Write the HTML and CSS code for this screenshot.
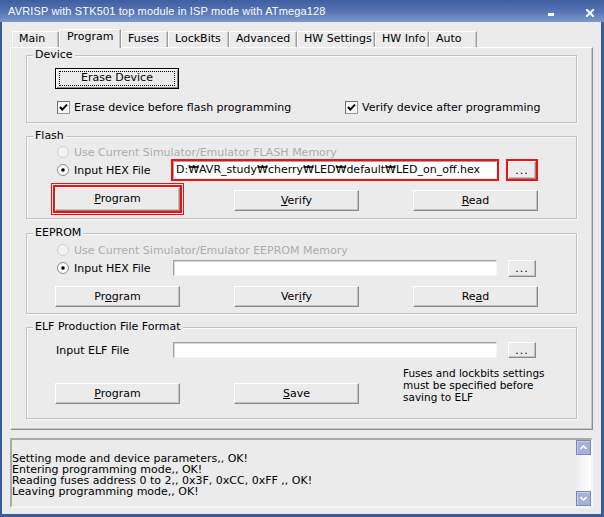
FILE: index.html
```html
<!DOCTYPE html>
<html>
<head>
<meta charset="utf-8">
<title>AVRISP</title>
<link rel="stylesheet" href="styles.css">
</head>
<body>
<div class="window">
  <div class="titlebar">
    <span class="title">AVRISP with STK501 top module in ISP mode with ATmega128</span>
    <span class="tb-min"></span>
    <svg class="tb-close" width="8" height="8" viewBox="0 0 8 8"><path d="M0.8 0.8 L7.2 7.2 M7.2 0.8 L0.8 7.2" stroke="#fff" stroke-width="2" stroke-linecap="square"/></svg>
  </div>
  <div class="client">
    <div class="tabs">
      <div class="tab t-main">Main</div>
      <div class="tab t-program active">Program</div>
      <div class="tab t-fuses">Fuses</div>
      <div class="tab t-lock">LockBits</div>
      <div class="tab t-adv">Advanced</div>
      <div class="tab t-hws">HW Settings</div>
      <div class="tab t-hwi">HW Info</div>
      <div class="tab t-auto">Auto</div>
    </div>
    <div class="panel">
      <div class="group g-device">
        <div class="legend">Device</div>
        <div class="row r-erase">
          <button class="btn btn-focus"><span class="focus-rect">Erase Device</span></button>
        </div>
        <div class="row r-checks">
          <label class="check c-first"><svg class="cb" width="13" height="13" viewBox="0 0 13 13"><rect x="0.5" y="0.5" width="12" height="12" fill="#f6f6f6" stroke="#9a9a9a"/><path d="M0.5 12.5 V0.5 H12.5" fill="none" stroke="#6e6e6e"/><path d="M3 6 L5.3 8.6 L10 3.6" fill="none" stroke="#000" stroke-width="2"/></svg>Erase device before flash programming</label>
          <label class="check"><svg class="cb" width="13" height="13" viewBox="0 0 13 13"><rect x="0.5" y="0.5" width="12" height="12" fill="#f6f6f6" stroke="#9a9a9a"/><path d="M0.5 12.5 V0.5 H12.5" fill="none" stroke="#6e6e6e"/><path d="M3 6 L5.3 8.6 L10 3.6" fill="none" stroke="#000" stroke-width="2"/></svg>Verify device after programming</label>
        </div>
      </div>

      <div class="group g-flash">
        <div class="legend">Flash</div>
        <div class="row r-opt first">
          <label class="radio disabled"><svg class="rd" width="12" height="12" viewBox="0 0 12 12"><circle cx="6" cy="6" r="5.5" fill="#f2f2f2" stroke="#d0d0d0"/></svg>Use Current Simulator/Emulator FLASH Memory</label>
        </div>
        <div class="row r-opt">
          <label class="radio fixed"><svg class="rd" width="12" height="12" viewBox="0 0 12 12"><circle cx="6" cy="6" r="5.5" fill="#fff" stroke="#8a8a8a"/><circle cx="6" cy="6" r="1.8" fill="#000"/></svg>Input HEX File</label>
          <div class="field tall hl">D:₩AVR_study₩cherry₩LED₩default₩LED_on_off.hex</div>
          <button class="btn dots tall hl">...</button>
        </div>
        <div class="row r-btns flash-btns">
          <button class="btn b-act big hl2"><u>P</u>rogram</button>
          <button class="btn b-act"><u>V</u>erify</button>
          <button class="btn b-act"><u>R</u>ead</button>
        </div>
      </div>

      <div class="group g-eeprom">
        <div class="legend">EEPROM</div>
        <div class="row r-opt first2">
          <label class="radio disabled"><svg class="rd" width="12" height="12" viewBox="0 0 12 12"><circle cx="6" cy="6" r="5.5" fill="#f2f2f2" stroke="#d0d0d0"/></svg>Use Current Simulator/Emulator EEPROM Memory</label>
        </div>
        <div class="row r-opt">
          <label class="radio fixed"><svg class="rd" width="12" height="12" viewBox="0 0 12 12"><circle cx="6" cy="6" r="5.5" fill="#fff" stroke="#8a8a8a"/><circle cx="6" cy="6" r="1.8" fill="#000"/></svg>Input HEX File</label>
          <div class="field"></div>
          <button class="btn dots">...</button>
        </div>
        <div class="row r-btns eeprom-btns">
          <button class="btn b-act">Pr<u>o</u>gram</button>
          <button class="btn b-act">Ver<u>i</u>fy</button>
          <button class="btn b-act">Re<u>a</u>d</button>
        </div>
      </div>

      <div class="group g-elf">
        <div class="legend">ELF Production File Format</div>
        <div class="row r-elf">
          <span class="fixed elf-label">Input ELF File</span>
          <div class="field"></div>
          <button class="btn dots">...</button>
        </div>
        <div class="row r-elf-btns">
          <button class="btn b-act"><u>P</u>rogram</button>
          <button class="btn b-act"><u>S</u>ave</button>
          <p class="note">Fuses and lockbits settings<br>must be specified before<br>saving to ELF</p>
        </div>
      </div>
    </div>

    <div class="log">
      <div class="log-text">Setting mode and device parameters,, OK!
Entering programming mode,, OK!
Reading fuses address 0 to 2,, 0x3F, 0xCC, 0xFF ,, OK!
Leaving programming mode,, OK!</div>
      <div class="scrollbar">
        <div class="sb-btn"><svg width="7" height="5" viewBox="0 0 7 5"><path d="M0.5 4 L3.5 1 L6.5 4" fill="none" stroke="#fff" stroke-width="1.6"/></svg></div>
        <div class="sb-track"></div>
        <div class="sb-btn"><svg width="7" height="5" viewBox="0 0 7 5"><path d="M0.5 1 L3.5 4 L6.5 1" fill="none" stroke="#fff" stroke-width="1.6"/></svg></div>
      </div>
    </div>
  </div>
</div>
</body>
</html>
```

FILE: styles.css
```css
* { box-sizing: border-box; }
html, body { margin: 0; padding: 0; }
body {
  width: 604px;
  height: 517px;
  overflow: hidden;
  font-family: "DejaVu Sans", "Noto Sans CJK KR", sans-serif;
  font-size: 11px;
  color: #000;
  background: #3c5a9c;
}

.window {
  width: 604px;
  height: 517px;
  display: flex;
  flex-direction: column;
  background: #3c5a9c;
}

/* title bar */
.titlebar {
  height: 22px;
  flex: none;
  display: flex;
  align-items: flex-start;
  padding: 0 10px 0 8px;
  background: linear-gradient(#3f5ea2, #5876b4 55%, #7b99cd);
  color: #fff;
}
.title {
  flex: 1;
  font-family: "Liberation Sans", Arial, sans-serif;
  font-size: 11px;
  line-height: 12px;
  margin-top: 5px;
  letter-spacing: 0.15px;
}
.tb-min {
  width: 6px;
  height: 3px;
  background: #fff;
  margin-top: 13px;
  margin-right: 32px;
}
.tb-close {
  margin-top: 9px;
}

/* client area */
.client {
  flex: 1;
  margin: 0 3px 3px 2px;
  background: #ebebeb;
  padding: 7px 8px 6px 8px;
  display: flex;
  flex-direction: column;
}

/* tabs */
.tabs {
  height: 18px;
  display: flex;
  align-items: flex-end;
  padding-left: 2px;
}
.tab {
  height: 16px;
  line-height: 14px;
  padding-left: 6px;
  background: #ebebeb;
  border-top: 1px solid #fff;
  border-left: 1px solid #fff;
  border-right: 1px solid #9c9c9c;
  box-shadow: inset -1px 0 0 #c8c8c8;
  white-space: nowrap;
}
.tab.active {
  height: 19px;
  margin-bottom: -1px;
  padding-left: 7px;
  position: relative;
  z-index: 1;
}
.t-main { width: 47px; }
.t-program { width: 62px; }
.t-fuses { width: 47px; }
.t-lock { width: 61px; }
.t-adv { width: 68px; }
.t-hws { width: 78px; }
.t-hwi { width: 54px; }
.t-auto { width: 48px; }

/* tab panel */
.panel {
  height: 383px;
  flex: none;
  border-top: 1px solid #fff;
  border-left: 1px solid #fff;
  border-right: 1px solid #8e8e8e;
  border-bottom: 1px solid #8e8e8e;
  box-shadow: inset -1px -1px 0 #c4c4c4;
  padding: 7px 15px 0 15px;
}

/* group boxes */
.group {
  border: 1px solid #c2c2c2;
  box-shadow: inset 1px 1px 0 #fafafa, 1px 1px 0 #fafafa;
  padding-left: 28px;
}
.legend {
  display: table;
  margin: -8px 0 0 -22px;
  padding: 0 2px;
  line-height: 13px;
  background: #ebebeb;
}
.g-device { height: 68px; margin-bottom: 13px; }
.g-flash { height: 83px; margin-bottom: 14px; }
.g-eeprom { height: 81px; margin-bottom: 13px; }
.g-elf { height: 92px; }

.row {
  display: flex;
  align-items: center;
}

/* buttons */
.btn {
  font: inherit;
  color: #000;
  padding: 0;
  margin: 0;
  background: #ebebeb;
  border: 1px solid;
  border-color: #fff #8a8a8a #8a8a8a #fff;
  box-shadow: inset -1px -1px 0 #c2c2c2;
  height: 21px;
  line-height: 17px;
  text-align: center;
  white-space: nowrap;
}
.btn u { text-decoration: underline; text-underline-offset: 1px; }

.r-erase { margin-top: 7px; }
.btn-focus {
  width: 124px;
  border: 1px solid #000;
  box-shadow: inset 1px 1px 0 #fff, inset -1px -1px 0 #8a8a8a;
  padding: 2px 3px;
  display: flex;
}
.focus-rect {
  flex: 1;
  border: 1px dotted #000;
  line-height: 11px;
}

.r-checks { margin-top: 11px; height: 14px; }
.check {
  display: flex;
  align-items: center;
  gap: 4px;
  white-space: nowrap;
}
.check .cb { margin-left: 2px; flex: none; }
.c-first { width: 288px; }

/* radio rows */
.r-opt { height: 18px; }
.r-opt.first { margin-top: 1px; }
.r-opt.first2 { margin-top: 2px; }
.radio {
  display: flex;
  align-items: center;
  gap: 5px;
  white-space: nowrap;
}
.radio .rd { margin-left: 2px; flex: none; }
.radio.disabled { color: #adadad; }
.fixed { width: 118px; flex: none; }
.elf-label { padding-left: 1px; }

/* text fields */
.field {
  width: 324px;
  height: 16px;
  background: #fff;
  border: 1px solid;
  border-color: #a2a2a2 #f4f4f4 #f4f4f4 #a2a2a2;
  box-shadow: inset 1px 1px 0 #d6d6d6;
  padding: 0 2px;
  line-height: 14px;
  white-space: nowrap;
  overflow: hidden;
}
.field.tall { height: 18px; line-height: 16px; }

.dots {
  width: 28px;
  height: 17px;
  margin-left: 11px;
  line-height: 11px;
  letter-spacing: 1px;
}
.dots.tall { height: 18px; }

.hl { box-shadow: 0 0 0 2px #f01010; }
.dots.hl { box-shadow: inset -1px -1px 0 #c2c2c2, 0 0 0 2px #f01010; }

/* action buttons */
.r-btns { align-items: flex-end; }
.b-act { width: 125px; flex: none; }
.b-act + .b-act { margin-left: 54px; }
.flash-btns { margin-top: 8px; }
.eeprom-btns { margin-top: 9px; }
.big { height: 24px; line-height: 20px; }
.hl2 {
  box-shadow: inset -1px -1px 0 #c2c2c2, 0 0 0 2px #f01010, 0 0 0 3px #f2eaea, 0 0 0 4px #f01010;
}

/* ELF rows */
.r-elf { margin-top: 9px; height: 16px; }
.r-elf .dots { height: 16px; }
.r-elf-btns { margin-top: 9px; align-items: flex-end; }
.note {
  margin: 0 0 1px 44px;
  font-size: 10.5px;
  line-height: 12px;
  white-space: nowrap;
}

/* log */
.log {
  margin-top: 8px;
  height: 70px;
  flex: none;
  display: flex;
  border: 2px solid;
  border-color: #ababab #f6f6f6 #f6f6f6 #ababab;
  background: #ebebeb;
}
.log-text {
  flex: 1;
  white-space: pre;
  overflow: hidden;
  line-height: 11px;
  padding-top: 13px;
}
.scrollbar {
  width: 15px;
  flex: none;
  display: flex;
  flex-direction: column;
  background: linear-gradient(to right, #eeeeee, #ffffff);
}
.sb-btn {
  height: 15px;
  flex: none;
  background: #a6b1d8;
  border: 1px solid #7886b8;
  box-shadow: inset 1px 1px 0 #c4cdea;
  display: flex;
  align-items: center;
  justify-content: center;
}
.sb-track { flex: 1; }
```
